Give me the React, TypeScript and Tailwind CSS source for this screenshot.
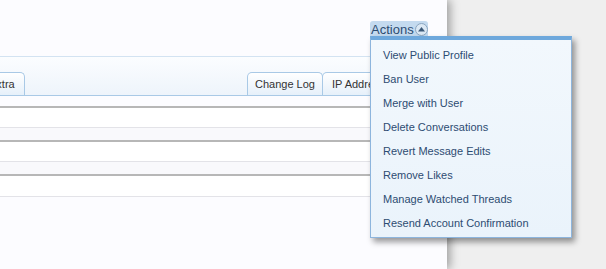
import React from 'react';

const menuItems = [
  'View Public Profile',
  'Ban User',
  'Merge with User',
  'Delete Conversations',
  'Revert Message Edits',
  'Remove Likes',
  'Manage Watched Threads',
  'Resend Account Confirmation',
];

const Tab: React.FC<{ label: string; className?: string }> = ({ label, className }) => (
  <div
    className={
      'h-[23px] flex items-center px-[9px] whitespace-nowrap border border-b-0 border-[#a9c9e6] rounded-t-[5px] bg-gradient-to-b from-white to-[#e6f0fa] text-[11px] text-[#333] ' +
      (className ?? '')
    }
  >
    {label}
  </div>
);

const App: React.FC = () => {
  return (
    <div
      className="relative w-[606px] h-[269px] overflow-hidden bg-[#efefef] flex"
      style={{ fontFamily: '"Liberation Sans", Arial, sans-serif' }}
    >
      <div className="w-[447px] h-full bg-[#fcfcff] shadow-[3px_0_9px_rgba(0,0,0,0.35)] flex flex-col">
        <div className="h-[56px] shrink-0" />
        <div className="h-[40px] shrink-0 border-t border-[#d3e3f2] border-b border-b-[#a9c9e6] bg-gradient-to-b from-[#fbfdff] to-[#eef4fb] flex items-end">
          <Tab label="Extra" className="-ml-[21px]" />
          <div className="flex-1" />
          <Tab label="Change Log" className="w-[76px] justify-center" />
          <Tab label="IP Addresses" className="w-[80px] -ml-px mr-[45px]" />
        </div>
        <div className="h-[10px] shrink-0" />
        <div className="flex flex-col">
          <div className="h-[22px] border-t-2 border-[#b7b7b7] border-b border-b-[#e3e3e8] bg-white" />
          <div className="h-[12px] bg-[#f9f9fc]" />
          <div className="h-[22px] border-t-2 border-[#b7b7b7] border-b border-b-[#e3e3e8] bg-white" />
          <div className="h-[12px] bg-[#f9f9fc]" />
          <div className="h-[23px] border-t-2 border-[#b7b7b7] border-b border-b-[#e3e3e8] bg-white" />
        </div>
      </div>

      <div className="absolute left-[370px] top-[21px] h-[16px] w-[58px] bg-[#c4daef] rounded-t-[3px] flex items-center pl-[1px] text-[13px] leading-none text-[#2d4c72]">
        <span>Actions</span>
        <span className="ml-[1px] w-[13px] h-[13px] rounded-full bg-[#dbe8f4] border border-[#8aa5c0] flex items-center justify-center">
          <svg width="9" height="7" viewBox="0 0 9 7">
            <path d="M4.5 1 L8 5.5 L1 5.5 Z" fill="#3d5a7a" />
          </svg>
        </span>
      </div>

      <div className="absolute left-[370px] top-[36px] w-[202px] h-[202px] border border-[#8db5dd] border-t-[4px] border-t-[#6ea8dc] bg-gradient-to-b from-[#f2f8fd] to-[#eaf3fb] shadow-[3px_4px_6px_rgba(0,0,0,0.4)] pt-[3px]">
        {menuItems.map((item) => (
          <div key={item} className="h-[24px] flex items-center pl-[12px] text-[11px] text-[#2d4c72]">
            {item}
          </div>
        ))}
      </div>
    </div>
  );
};

export default App;
